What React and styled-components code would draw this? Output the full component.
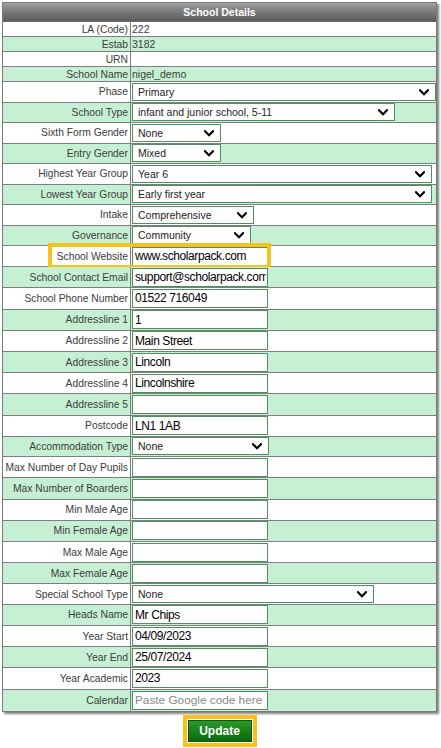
import React from "react";
import styled, { createGlobalStyle } from "styled-components";

const Global = createGlobalStyle`
  html, body { margin: 0; padding: 0; background: #ffffff; }
  body { font-family: "Liberation Sans", Arial, sans-serif; }
  * { box-sizing: border-box; }
`;

const Page = styled.div`
  width: 441px;
  padding: 2px 4px 0 2px;
  display: flex;
  flex-direction: column;
  align-items: center;
`;

const Panel = styled.div`
  width: 100%;
  border: 1px solid #7a7a7a;
  box-shadow: 2px 2px 2px rgba(90, 90, 90, 0.75);
  display: flex;
  flex-direction: column;
`;

const Header = styled.div`
  height: 19px;
  background: linear-gradient(#a2a2a2 0%, #7c7c7c 45%, #5c5c5c 100%);
  color: #ffffff;
  font-weight: bold;
  font-size: 10.5px;
  display: flex;
  align-items: center;
  justify-content: center;
  border-bottom: 1px solid #6a6a6a;
`;

const Row = styled.div`
  position: relative;
  display: grid;
  grid-template-columns: 128px 1fr;
  height: ${(p) => p.$h}px;
  background: ${(p) => (p.$alt ? "#c6f0d3" : "#ffffff")};
  border-bottom: 1px solid #7e7e7e;
  &:last-child { border-bottom: none; }
`;

const Label = styled.div`
  border-right: 1px solid #7e7e7e;
  display: flex;
  align-items: center;
  justify-content: flex-end;
  padding-right: 2px;
  font-size: 10.3px;
  color: #3c3c3c;
  white-space: nowrap;
  background: ${(p) => (p.$white ? "#ffffff" : "transparent")};
`;

const Value = styled.div`
  display: flex;
  align-items: center;
  padding-left: 1px;
  font-size: 10.5px;
  color: #3c3c3c;
`;

const TextInput = styled.input`
  width: 136px;
  height: 19px;
  border: 1px solid #4d8f5d;
  background: #ffffff;
  padding: 0 1px 0 2px;
  font-family: "Liberation Sans", Arial, sans-serif;
  font-size: 12px;
  letter-spacing: -0.4px;
  color: #000000;
  outline: none;
  &::placeholder { color: #8a8a8a; font-size: 11.8px; letter-spacing: 0; }
`;

const SelectWrap = styled.div`
  position: relative;
  width: ${(p) => p.$w}px;
  height: 18px;
`;

const Select = styled.select`
  appearance: none;
  -webkit-appearance: none;
  width: 100%;
  height: 100%;
  border: 1px solid #4d8f5d;
  border-radius: 0;
  background: #ffffff;
  padding: 0 0 0 5px;
  font-family: "Liberation Sans", Arial, sans-serif;
  font-size: 10.5px;
  color: #222222;
  outline: none;
`;

const Chevron = styled.svg`
  position: absolute;
  right: 7px;
  top: 6px;
  width: 10px;
  height: 7px;
  pointer-events: none;
`;

const Highlight = styled.div`
  position: absolute;
  left: 45px;
  top: -3px;
  width: 223px;
  height: 26px;
  border: 4px solid #f7c21b;
  pointer-events: none;
`;

const ButtonFrame = styled.div`
  margin-top: 3px;
  border: 4px solid #f7c21b;
  padding: 1px;
  display: flex;
`;

const UpdateButton = styled.button`
  width: 64px;
  height: 22px;
  border: 1px solid #0b560b;
  background: linear-gradient(#2b9a2b 0%, #17821a 50%, #0c680e 100%);
  color: #ffffff;
  font-family: "Liberation Sans", Arial, sans-serif;
  font-weight: bold;
  font-size: 12px;
  padding: 0;
  cursor: pointer;
`;

const rows = [
  { label: "LA (Code)", type: "text", value: "222" },
  { label: "Estab", type: "text", value: "3182" },
  { label: "URN", type: "text", value: "" },
  { label: "School Name", type: "text", value: "nigel_demo" },
  { label: "Phase", type: "select", value: "Primary", w: 304 },
  { label: "School Type", type: "select", value: "infant and junior school, 5-11", w: 263 },
  { label: "Sixth Form Gender", type: "select", value: "None", w: 89 },
  { label: "Entry Gender", type: "select", value: "Mixed", w: 89 },
  { label: "Highest Year Group", type: "select", value: "Year 6", w: 300 },
  { label: "Lowest Year Group", type: "select", value: "Early first year", w: 300 },
  { label: "Intake", type: "select", value: "Comprehensive", w: 122 },
  { label: "Governance", type: "select", value: "Community", w: 119 },
  { label: "School Website", type: "input", value: "www.scholarpack.com", highlight: true },
  { label: "School Contact Email", type: "input", value: "support@scholarpack.com" },
  { label: "School Phone Number", type: "input", value: "01522 716049" },
  { label: "Addressline 1", type: "input", value: "1" },
  { label: "Addressline 2", type: "input", value: "Main Street" },
  { label: "Addressline 3", type: "input", value: "Lincoln" },
  { label: "Addressline 4", type: "input", value: "Lincolnshire" },
  { label: "Addressline 5", type: "input", value: "" },
  { label: "Postcode", type: "input", value: "LN1 1AB" },
  { label: "Accommodation Type", type: "select", value: "None", w: 137 },
  { label: "Max Number of Day Pupils", type: "input", value: "" },
  { label: "Max Number of Boarders", type: "input", value: "" },
  { label: "Min Male Age", type: "input", value: "" },
  { label: "Min Female Age", type: "input", value: "" },
  { label: "Max Male Age", type: "input", value: "" },
  { label: "Max Female Age", type: "input", value: "" },
  { label: "Special School Type", type: "select", value: "None", w: 242 },
  { label: "Heads Name", type: "input", value: "Mr Chips" },
  { label: "Year Start", type: "input", value: "04/09/2023" },
  { label: "Year End", type: "input", value: "25/07/2024" },
  { label: "Year Academic", type: "input", value: "2023" },
  { label: "Calendar", type: "input", value: "", placeholder: "Paste Google code here" },
];

const heightFor = (t) => (t === "text" ? 15 : t === "select" ? 20.5 : 21.2);

function Field({ row }) {
  if (row.type === "text") return <Value>{row.value}</Value>;
  if (row.type === "select")
    return (
      <Value>
        <SelectWrap $w={row.w}>
          <Select defaultValue={row.value}>
            <option>{row.value}</option>
          </Select>
          <Chevron viewBox="0 0 10 7">
            <path d="M1 1.2 L5 5.2 L9 1.2" fill="none" stroke="#000" strokeWidth="2.2" strokeLinecap="square" />
          </Chevron>
        </SelectWrap>
      </Value>
    );
  return (
    <Value>
      <TextInput defaultValue={row.value} placeholder={row.placeholder} />
    </Value>
  );
}

export default function App() {
  return (
    <>
      <Global />
      <Page>
        <Panel>
          <Header>School Details</Header>
          {rows.map((row, i) => (
            <Row key={row.label} $alt={i % 2 === 1} $h={heightFor(row.type)}>
              <Label $white={row.highlight}>{row.label}</Label>
              <Field row={row} />
              {row.highlight && <Highlight />}
            </Row>
          ))}
        </Panel>
        <ButtonFrame>
          <UpdateButton type="button">Update</UpdateButton>
        </ButtonFrame>
      </Page>
    </>
  );
}
